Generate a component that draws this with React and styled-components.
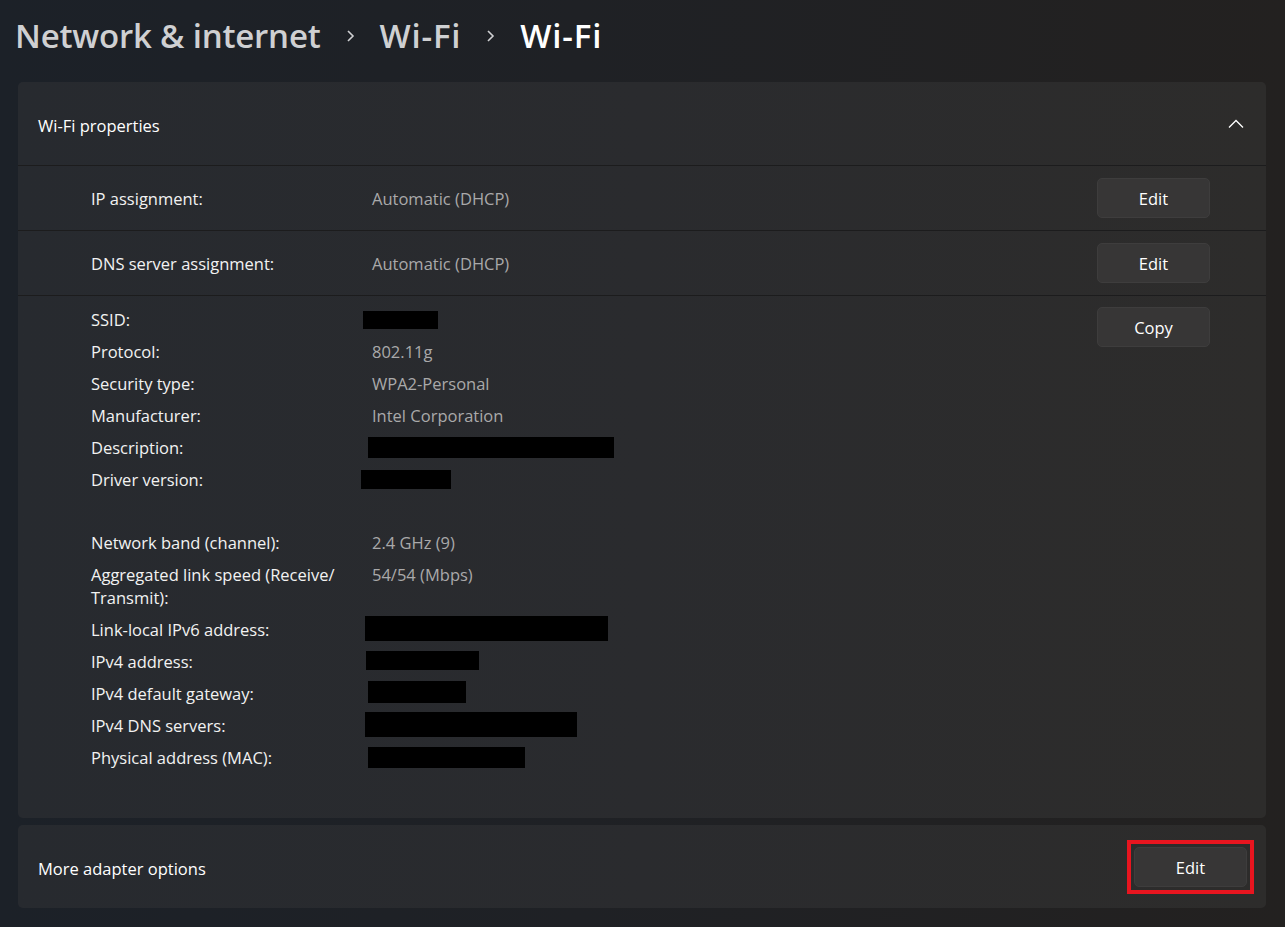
import React from "react";
import styled, { createGlobalStyle } from "styled-components";

const GlobalStyle = createGlobalStyle`
  html, body {
    margin: 0;
    padding: 0;
    background: #1f2023;
  }
  body {
    font-family: "Open Sans", "Noto Sans", "Liberation Sans", sans-serif;
    color: #ffffff;
  }
`;

const Page = styled.div`
  min-height: 927px;
  box-sizing: border-box;
  padding: 0 19px 20px 18px;
  background: linear-gradient(90deg, #1c2128 0%, #1f2125 45%, #232120 100%);
`;

const Breadcrumb = styled.div`
  height: 82px;
  display: flex;
  align-items: center;
  gap: 25px;
  margin-left: -3px;
  font-size: 33px;
  font-weight: 600;
`;

const Crumb = styled.span`
  color: ${(p) => (p.current ? "#ffffff" : "#cfd0d2")};
  line-height: 1;
  padding-bottom: 12px;
  letter-spacing: ${(p) => (p.short ? "0.8px" : "-0.2px")};
`;

const ChevronBox = styled.span`
  display: flex;
  padding-bottom: 10px;
`;

const Card = styled.div`
  border-radius: 5px;
  background: linear-gradient(90deg, #272a2f 0%, #2a2b2e 50%, #2d2c2b 100%);
  margin-bottom: 7px;
`;

const HeaderRow = styled.div`
  height: 83px;
  display: flex;
  align-items: center;
  justify-content: space-between;
  padding: 0 22px 0 20px;
  font-size: 16.5px;
  & > span {
    padding-top: 3px;
  }
`;

const SettingRow = styled.div`
  height: 64px;
  display: flex;
  align-items: center;
  border-top: 1px solid #1c1c1d;
  padding: 0 56px 0 73px;
  font-size: 16.5px;
`;

const Label = styled.div`
  width: 281px;
  flex-shrink: 0;
  color: #f2f2f2;
  padding-top: 1px;
`;

const Value = styled.div`
  flex: 1;
  color: #a9a9aa;
  padding-top: 1px;
`;

const Button = styled.button`
  width: 113px;
  height: 40px;
  border-radius: 5px;
  border: 1px solid #3e3d3d;
  background: #373636;
  color: #ffffff;
  font-family: inherit;
  font-size: 16.5px;
  padding: 0;
  flex-shrink: 0;
`;

const Highlight = styled.span`
  display: flex;
  padding: 3px;
  border: 4px solid #e8151f;
  margin-top: 1px;
`;

const Details = styled.div`
  display: flex;
  border-top: 1px solid #1c1c1d;
  padding: 11px 56px 48px 73px;
`;

const DetailGrid = styled.div`
  flex: 1;
  display: grid;
  grid-template-columns: 281px 1fr;
  row-gap: 9px;
  padding-top: 1px;
  margin-bottom: 1px;
  font-size: 16.5px;
  line-height: 23px;
`;

const DetailLabel = styled.div`
  color: #f2f2f2;
  padding-right: 14px;
`;

const DetailValue = styled.div`
  color: #a9a9aa;
  position: relative;
`;

const Spacer = styled.div`
  grid-column: 1 / 3;
  height: 22px;
`;

const Redacted = styled.span`
  position: absolute;
  left: ${(p) => p.x}px;
  top: ${(p) => p.y}px;
  width: ${(p) => p.w}px;
  height: ${(p) => p.h}px;
  background: #000000;
`;

const BottomRow = styled.div`
  height: 83px;
  display: flex;
  align-items: center;
  justify-content: space-between;
  padding: 0 12px 0 20px;
  font-size: 16.5px;
  & > span:first-child {
    padding-top: 3px;
  }
`;

const Chevron = () => (
  <ChevronBox>
    <svg width="9" height="14" viewBox="0 0 9 14">
      <path d="M2 2 L7 7 L2 12" stroke="#cfd0d2" strokeWidth="1.6" fill="none" />
    </svg>
  </ChevronBox>
);

const ChevronUp = () => (
  <svg width="16" height="10" viewBox="0 0 16 10">
    <path d="M1 8.5 L8 1.5 L15 8.5" stroke="#ffffff" strokeWidth="1.3" fill="none" />
  </svg>
);

// redaction boxes are positioned against the value cell (value column starts at x=372)
const details = [
  { label: "SSID:", box: { x: -9, y: 3, w: 75, h: 18 } },
  { label: "Protocol:", value: "802.11g" },
  { label: "Security type:", value: "WPA2-Personal" },
  { label: "Manufacturer:", value: "Intel Corporation" },
  { label: "Description:", box: { x: -4, y: 1, w: 246, h: 21 } },
  { label: "Driver version:", box: { x: -11, y: 2, w: 90, h: 19 } },
  { spacer: true },
  { label: "Network band (channel):", value: "2.4 GHz (9)" },
  { label: "Aggregated link speed (Receive/ Transmit):", value: "54/54 (Mbps)" },
  { label: "Link-local IPv6 address:", box: { x: -7, y: -2, w: 243, h: 25 } },
  { label: "IPv4 address:", box: { x: -6, y: 1, w: 113, h: 19 } },
  { label: "IPv4 default gateway:", box: { x: -4, y: -1, w: 98, h: 22 } },
  { label: "IPv4 DNS servers:", box: { x: -7, y: -2, w: 212, h: 25 } },
  { label: "Physical address (MAC):", box: { x: -4, y: 1, w: 157, h: 21 } },
];

export default function App() {
  return (
    <>
      <GlobalStyle />
      <Page>
        <Breadcrumb>
          <Crumb>Network &amp; internet</Crumb>
          <Chevron />
          <Crumb short>Wi-Fi</Crumb>
          <Chevron />
          <Crumb short current>
            Wi-Fi
          </Crumb>
        </Breadcrumb>

        <Card>
          <HeaderRow>
            <span>Wi-Fi properties</span>
            <ChevronUp />
          </HeaderRow>
          <SettingRow>
            <Label>IP assignment:</Label>
            <Value>Automatic (DHCP)</Value>
            <Button>Edit</Button>
          </SettingRow>
          <SettingRow>
            <Label>DNS server assignment:</Label>
            <Value>Automatic (DHCP)</Value>
            <Button>Edit</Button>
          </SettingRow>
          <Details>
            <DetailGrid>
              {details.map((d, i) =>
                d.spacer ? (
                  <Spacer key={i} />
                ) : (
                  <React.Fragment key={i}>
                    <DetailLabel>{d.label}</DetailLabel>
                    <DetailValue>
                      {d.value}
                      {d.box && <Redacted {...d.box} />}
                    </DetailValue>
                  </React.Fragment>
                )
              )}
            </DetailGrid>
            <Button>Copy</Button>
          </Details>
        </Card>

        <Card>
          <BottomRow>
            <span>More adapter options</span>
            <Highlight>
              <Button>Edit</Button>
            </Highlight>
          </BottomRow>
        </Card>
      </Page>
    </>
  );
}
